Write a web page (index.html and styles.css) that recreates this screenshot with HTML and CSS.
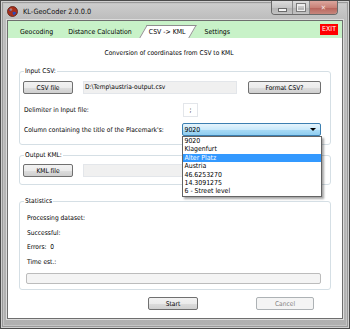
FILE: index.html
```html
<!DOCTYPE html>
<html lang="en">

<head>
    <meta charset="UTF-8">
    <meta name="viewport" content="width=device-width, initial-scale=1.0">
    <title>KL-GeoCoder 2.0.0.0</title>
    <link rel="stylesheet" href="styles.css">
</head>

<body>
    <div class="window">
        <div class="titlebar">
            <svg class="app-icon" width="11" height="11" viewBox="0 0 11 11">
                <circle cx="5.5" cy="5.5" r="5" fill="#a8301c" stroke="#5a1a10" stroke-width="0.8"/>
                <path d="M2 4 Q3.5 2 5 3.2 Q4.5 5 3 5.5 Z" fill="#2c48b8"/>
                <path d="M5.5 6 Q8 5 9.2 7 Q7.5 9.5 6 8.8 Z" fill="#2c48b8"/>
                <circle cx="4" cy="3.5" r="1.3" fill="#f0a070" opacity="0.6"/>
            </svg>
            <span class="title">KL-GeoCoder 2.0.0.0</span>
            <div class="caption-buttons">
                <span class="cap cap-min"></span>
                <span class="cap cap-max"></span>
                <span class="cap cap-close">&#x2715;</span>
            </div>
        </div>

        <div class="client">
            <div class="tabs">
                <span class="tab">Geocoding</span>
                <span class="tab">Distance Calculation</span>
                <span class="tab active">CSV -&gt; KML</span>
                <span class="tab">Settings</span>
                <span class="exit">EXIT</span>
            </div>

            <div class="panel">
                <div class="heading">Conversion of coordinates from CSV to KML</div>

                <fieldset class="group input-group">
                    <legend>Input CSV:</legend>
                    <div class="file-row">
                        <button class="btn file-btn">CSV file</button>
                        <div class="field readonly">D:\Temp\austria-output.csv</div>
                        <button class="btn format-btn">Format CSV?</button>
                    </div>
                    <div class="option-row delim-row">
                        <span class="label">Delimiter in Input file:</span>
                        <div class="field delim">;</div>
                    </div>
                    <div class="option-row combo-row">
                        <span class="label">Column containing the title of the Placemark's:</span>
                        <div class="combo">
                            <span class="combo-value">9020</span>
                            <span class="arrow"></span>
                            <ul class="dropdown">
                                <li>9020</li>
                                <li>Klagenfurt</li>
                                <li class="selected">Alter Platz</li>
                                <li>Austria</li>
                                <li>46.6253270</li>
                                <li>14.3091275</li>
                                <li>6 - Street level</li>
                            </ul>
                        </div>
                    </div>
                </fieldset>

                <fieldset class="group output-group">
                    <legend>Output KML:</legend>
                    <div class="file-row">
                        <button class="btn file-btn">KML file</button>
                        <div class="field readonly"></div>
                    </div>
                </fieldset>

                <fieldset class="group stats-group">
                    <legend>Statistics</legend>
                    <div class="stat">Processing dataset:</div>
                    <div class="stat">Successful:</div>
                    <div class="stat">Errors:&nbsp; 0</div>
                    <div class="stat">Time est.:</div>
                    <div class="progress"></div>
                </fieldset>

                <div class="actions">
                    <button class="btn start-btn">Start</button>
                    <button class="btn cancel-btn" disabled>Cancel</button>
                </div>
            </div>
        </div>
    </div>
</body>

</html>
```

FILE: styles.css
```css
body {
    margin: 0;
    font-family: "DejaVu Sans Condensed", "Liberation Sans", Arial, sans-serif;
    font-size: 6.6px;
    color: #000;
    background: #a9a9a9;
}

.window {
    width: 350px;
    height: 329px;
    box-sizing: border-box;
    display: flex;
    flex-direction: column;
    border: 1px solid #4a4a4a;
    box-shadow: inset 0 0 0 1px #d0d0d0, inset 0 0 0 2px #9a9a9a, inset 0 0 0 3px #c4c4c4;
    background: linear-gradient(#cfcfcf, #bdbdbd 18px, #b0b0b0);
}

/* title bar */
.titlebar {
    height: 19px;
    display: flex;
    align-items: flex-start;
    padding-left: 6px;
    padding-right: 11px;
}

.app-icon {
    margin-top: 5px;
}

.title {
    margin-left: 5px;
    margin-top: 6px;
    font-size: 7.3px;
    line-height: 9px;
    color: #111;
}

.caption-buttons {
    display: flex;
    margin-left: auto;
    height: 13px;
    border: 1px solid #6a6a6a;
    border-top: none;
    border-radius: 0 0 4px 4px;
    overflow: hidden;
}

.cap {
    height: 13px;
    box-sizing: border-box;
    display: flex;
    align-items: center;
    justify-content: center;
    background: linear-gradient(#dcdcdc, #c6c6c6 50%, #b4b4b4 51%, #c2c2c2);
    border-left: 1px solid #8a8a8a;
}

.cap-min {
    width: 20px;
    border-left: none;
}

.cap-min::after {
    content: "";
    width: 7px;
    height: 2px;
    margin-top: 5px;
    background: #f4f4f4;
    box-shadow: 0 0 0 1px #6a6a6a;
}

.cap-max {
    width: 17px;
}

.cap-max::after {
    content: "";
    width: 6px;
    height: 4px;
    border: 1px solid #eee;
    border-top-width: 2px;
    box-shadow: 0 0 0 1px #7a7a7a;
}

.cap-close {
    width: 28px;
    color: #f4e4e0;
    font-size: 7px;
    background: linear-gradient(#dca69e, #c98177 50%, #b8625a 51%, #c6867c);
}

/* client area */
.client {
    height: 299px;
    box-sizing: border-box;
    margin: 0 6px;
    border: 1px solid #6e6e6e;
    box-shadow: 0 0 0 1px #dcdcdc;
    background: #fff;
    display: flex;
    flex-direction: column;
}

.tabs {
    height: 17px;
    display: flex;
    align-items: flex-end;
    padding-left: 12px;
    background: #c8f2c8;
    font-size: 6.9px;
}

.tab {
    position: relative;
    line-height: 10px;
    padding-bottom: 1px;
    margin-right: 15px;
}

.tab.active {
    margin-left: 2px;
    margin-right: 19px;
    isolation: isolate;
}

.tab.active::before {
    content: "";
    position: absolute;
    left: -6px;
    right: -7px;
    top: -2px;
    bottom: 0;
    background: #fff;
    border: 1px solid #8e8e8e;
    border-bottom: none;
    transform: skewX(-30deg);
    z-index: -1;
}

.exit {
    align-self: flex-start;
    margin-top: 3px;
    margin-left: auto;
    margin-right: 4px;
    height: 11px;
    line-height: 11px;
    padding: 0 2px;
    background: #ff0000;
    color: #fff;
    font-size: 7px;
}

.panel {
    flex: 1;
    display: flex;
    flex-direction: column;
    padding-top: 10px;
}

.heading {
    line-height: 10px;
    text-align: center;
    padding-right: 12px;
}

/* group boxes */
.group {
    margin: 0 11px;
    min-width: 0;
    border: 1px solid #d5dfe5;
    border-radius: 3px;
    padding: 0 9px 0 3px;
}

.group legend {
    padding: 0 1px;
    margin-left: 1px;
    line-height: 8px;
}

.input-group {
    margin-top: 9px;
    padding-top: 6px;
    padding-bottom: 8px;
}

.output-group {
    margin-top: 6px;
    padding-top: 5px;
    padding-bottom: 7px;
}

.stats-group {
    margin-top: 12px;
    padding-top: 6px;
    padding-bottom: 5px;
    padding-left: 6px;
}

.stats-group legend {
    margin-left: -2px;
}

.file-row {
    display: flex;
    align-items: center;
    height: 13px;
}

.option-row {
    display: flex;
    align-items: center;
}

.label {
    width: 159px;
    margin-left: 1px;
}

.delim-row {
    margin-top: 9px;
    height: 14px;
}

.combo-row {
    margin-top: 6px;
    height: 13px;
}

/* controls */
.btn {
    height: 13px;
    padding: 0;
    border: 1px solid #707070;
    border-radius: 2px;
    font-family: inherit;
    font-size: 6.6px;
    color: #000;
    background: linear-gradient(#f2f2f2, #ebebeb 50%, #dddddd 51%, #cfcfcf);
}

.file-btn {
    width: 50px;
}

.format-btn {
    width: 73px;
    margin-left: auto;
}

.field {
    box-sizing: border-box;
    border: 1px solid #e3e6ea;
    line-height: 11px;
}

.readonly {
    width: 154px;
    height: 13px;
    margin-left: 10px;
    padding-left: 1px;
    background: #f0f0f0;
}

.delim {
    width: 15px;
    height: 14px;
    line-height: 12px;
    text-align: center;
    background: #fff;
}

.combo {
    position: relative;
    width: 139px;
    height: 13px;
    box-sizing: border-box;
    display: flex;
    align-items: center;
    border: 1px solid #3c7fb1;
    border-radius: 2px;
    background: linear-gradient(#e6f4fc, #c9e9fb 50%, #a9dbf6 51%, #8fcdf0);
}

.combo-value {
    padding-left: 1px;
    font-size: 6.9px;
}

.arrow {
    margin-left: auto;
    margin-right: 4px;
    width: 0;
    height: 0;
    border-left: 3px solid transparent;
    border-right: 3px solid transparent;
    border-top: 3px solid #000;
}

.dropdown {
    position: absolute;
    top: 12px;
    left: -1px;
    width: 140px;
    box-sizing: border-box;
    margin: 0;
    padding: 0;
    list-style: none;
    background: #fff;
    border: 1px solid #646464;
    box-shadow: 2px 2px 2px rgba(0, 0, 0, 0.35);
    z-index: 5;
}

.dropdown li {
    line-height: 8.4px;
    height: 8.4px;
    padding-left: 1px;
    font-size: 6.9px;
}

.dropdown .selected {
    background: #3399ff;
    color: #fff;
}

.stat {
    line-height: 14.5px;
    margin-left: 1px;
}

.progress {
    margin-top: 4px;
    height: 11px;
    box-sizing: border-box;
    border: 1px solid #bcbcbc;
    border-radius: 2px;
    background: #f4f4f4;
}

.actions {
    display: flex;
    margin-top: 7px;
    margin-left: 140px;
}

.start-btn {
    width: 50px;
}

.cancel-btn {
    width: 58px;
    margin-left: 58px;
    color: #838383;
    border-color: #adb2b5;
    background: #f4f4f4;
}
```
